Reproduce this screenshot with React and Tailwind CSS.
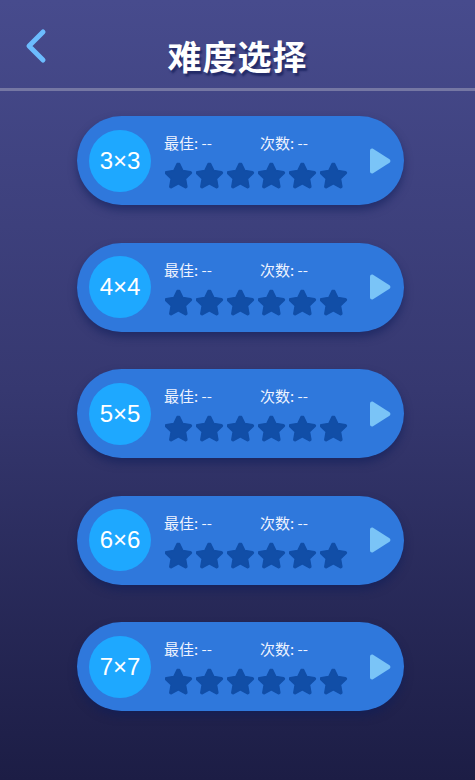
const levels = ['3×3', '4×4', '5×5', '6×6', '7×7'];

function Star() {
  return (
    <svg width="29" height="28" viewBox="0 0 24 24" className="shrink-0">
      <path
        d="M12 2.2l2.9 6 6.5.9c.8.1 1.1 1.1.5 1.6l-4.7 4.6 1.1 6.5c.1.8-.7 1.4-1.4 1l-5.9-3.1-5.9 3.1c-.7.4-1.5-.2-1.4-1l1.1-6.5-4.7-4.6c-.6-.5-.3-1.5.5-1.6l6.5-.9 2.9-6z"
        fill="#114ea7"
        stroke="#114ea7"
        strokeWidth="1.2"
        strokeLinejoin="round"
      />
    </svg>
  );
}

function PlayIcon() {
  return (
    <svg width="26" height="30" viewBox="0 0 26 30">
      <path
        d="M3 4.5c0-1.6 1.7-2.5 3-1.7l16.5 10.5c1.2.8 1.2 2.6 0 3.4L6 27.2c-1.3.8-3-.1-3-1.7z"
        fill="#7ac4f7"
      />
    </svg>
  );
}

function LevelCard({ label }) {
  return (
    <div className="w-[327px] h-[89px] ml-[77px] rounded-full bg-[#2f78dc] shadow-[0_5px_8px_rgba(12,30,90,0.55)] flex items-center pl-[12px] pr-[10px]">
      <div className="w-[62px] h-[62px] rounded-full bg-[#1ea8ff] flex items-center justify-center text-white text-[24px] font-['Liberation_Sans',sans-serif]">
        {label}
      </div>
      <div className="ml-[13px] self-start pt-[19px] flex flex-col">
        <div className="flex text-[15px] leading-[16px] text-[#eef3ff] font-['Noto_Sans_CJK_SC',sans-serif]">
          <span className="w-[96px]">最佳: --</span>
          <span>次数: --</span>
        </div>
        <div className="flex gap-[2px] mt-[10px] ml-[1px]">
          {[0, 1, 2, 3, 4, 5].map((i) => (
            <Star key={i} />
          ))}
        </div>
      </div>
      <div className="ml-auto mr-[1px] flex items-center">
        <PlayIcon />
      </div>
    </div>
  );
}

export default function App() {
  return (
    <div className="w-[475px] h-[780px] bg-gradient-to-b from-[#474b8d] via-[#363870] to-[#1c1d45] overflow-hidden">
      <div className="relative h-[91px] border-b-[3px] border-[#7577a3] flex justify-center">
        <svg className="absolute left-[24px] top-[27px]" width="28" height="40" viewBox="0 0 28 40">
          <path d="M19 5L5 19l14 14" fill="none" stroke="#6cbcfe" strokeWidth="5" strokeLinecap="round" strokeLinejoin="round" />
        </svg>
        <h1 className="pt-[39px] leading-none text-[34px] font-bold text-white tracking-[1px] font-['Noto_Sans_CJK_SC',sans-serif] [text-shadow:2px_3px_2px_rgba(20,30,90,0.7)]">
          难度选择
        </h1>
      </div>
      <div className="flex flex-col gap-[37.5px] pt-[25px]">
        {levels.map((l) => (
          <LevelCard key={l} label={l} />
        ))}
      </div>
    </div>
  );
}
